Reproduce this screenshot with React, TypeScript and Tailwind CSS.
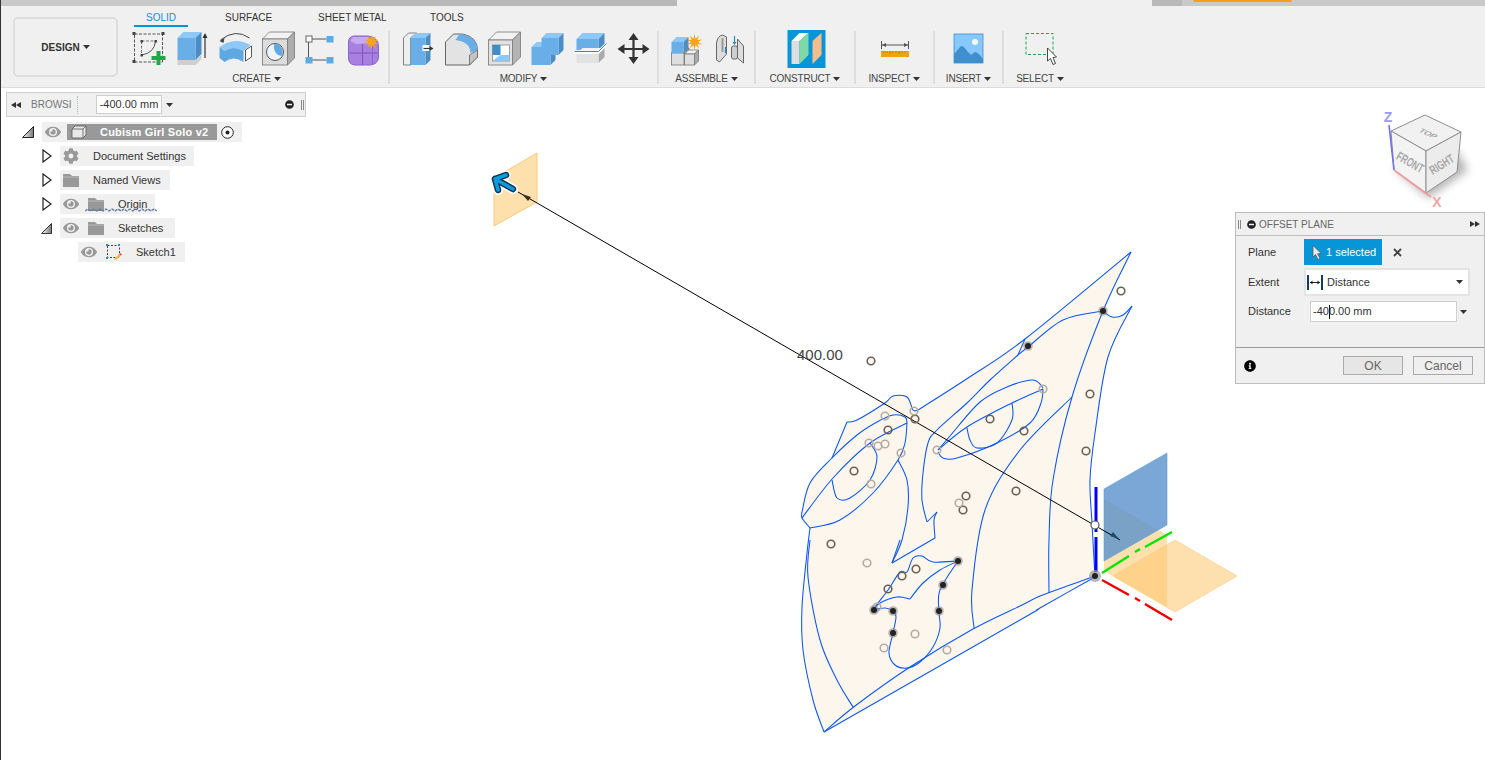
import type { ReactNode } from "react";
import { FaCog, FaEye, FaInfoCircle, FaMinusCircle } from "react-icons/fa";

type Pt = [number, number];

// catmull-rom through traced points
function curve(pts: Pt[]) {
    let d = `M${pts[0][0]},${pts[0][1]}`;
    for (let i = 0; i < pts.length - 1; i++) {
        const p0 = pts[Math.max(i - 1, 0)];
        const p1 = pts[i];
        const p2 = pts[i + 1];
        const p3 = pts[Math.min(i + 2, pts.length - 1)];
        const c1 = [p1[0] + (p2[0] - p0[0]) / 6, p1[1] + (p2[1] - p0[1]) / 6];
        const c2 = [p2[0] - (p3[0] - p1[0]) / 6, p2[1] - (p3[1] - p1[1]) / 6];
        d += ` C${c1[0]},${c1[1]} ${c2[0]},${c2[1]} ${p2[0]},${p2[1]}`;
    }
    return d;
}

function star(cx: number, cy: number, r1: number, r2: number, n = 10) {
    const out: string[] = [];
    for (let i = 0; i < n * 2; i++) {
        const r = i % 2 ? r2 : r1;
        const a = (Math.PI * i) / n;
        out.push(`${cx + r * Math.sin(a)},${cy - r * Math.cos(a)}`);
    }
    return out.join(" ");
}

const upperEdge: Pt[] = [[824, 732], [855, 706], [910, 667], [973, 629], [1020, 606], [1040, 596], [1070, 585], [1095, 576]];
const lowerEdge: Pt[] = [[824, 732], [1020, 620], [1040, 608], [1095, 577]];
const rightEdge: Pt[] = [[1095, 577], [1092, 523], [1090, 480], [1095, 433], [1108, 357], [1132, 306]];
const wave: Pt[] = [[1132, 306], [1123, 315], [1112, 317], [1103, 311]];
const capEdge: Pt[] = [[918, 410], [913, 410], [907, 397], [893, 396], [885, 403], [857, 420], [847, 422]];
const eyeArc: Pt[] = [[832, 458], [810, 483], [802, 512], [802, 518], [810, 528]];
const leftEdge: Pt[] = [[810, 528], [807, 553], [802, 607], [803, 650], [813, 700], [824, 732]];

const blueCurves: Pt[][] = [
    upperEdge,
    lowerEdge,
    rightEdge,
    wave,
    [[1103, 311], [1063, 320], [1028, 347], [1018, 355]],
    [[1018, 355], [1025, 339]],
    [[1131, 252], [1103, 311], [1072, 397], [1053, 480], [1049, 540], [1049, 593]],
    [[1072, 397], [1020, 450], [985, 510], [972, 590], [974, 628]],
    [[1131, 252], [1025, 339], [965, 380], [918, 410]],
    capEdge,
    [[847, 422], [832, 458]],
    leftEdge,
    [[810, 540], [808, 577], [820, 640], [837, 680], [853, 707]],
    // left eye
    [[802, 512], [810, 483], [832, 458], [857, 435], [877, 422], [893, 415], [905, 417], [907, 423]],
    [[802, 512], [802, 518], [810, 528]],
    [[907, 423], [870, 443], [833, 478], [802, 518]],
    [[907, 423], [905, 443], [898, 460], [873, 493], [840, 520], [810, 528]],
    [[870, 443], [877, 457], [870, 480], [850, 498], [837, 498], [832, 480]],
    // nose
    [[898, 460], [907, 480], [908, 507], [902, 540], [892, 563]],
    [[892, 563], [935, 538]],
    [[935, 538], [934, 520], [937, 512]],
    [[937, 512], [927, 522]],
    [[927, 522], [922, 500], [923, 473], [928, 443], [937, 430], [967, 403], [990, 380], [1018, 355]],
    // right eye
    [[938, 450], [950, 436], [980, 402], [1007, 387], [1033, 380], [1043, 388]],
    [[938, 450], [967, 427], [1012, 403], [1043, 389]],
    [[1043, 389], [1041, 403], [1030, 423], [997, 443], [957, 458], [943, 458], [938, 452]],
    [[1012, 403], [1012, 420], [997, 443], [977, 448], [970, 440], [967, 428]],
    // mouth and chin
    [[900, 540], [892, 563]],
    [[958, 561], [933, 562], [922, 556], [913, 558], [907, 572], [900, 572], [888, 590], [878, 603], [873, 610]],
    [[958, 561], [940, 570], [923, 583], [910, 599]],
    [[910, 599], [897, 597], [880, 603], [873, 610]],
    [[873, 610], [885, 608], [893, 611], [896, 617], [893, 633], [889, 653], [895, 665], [907, 668], [920, 662], [933, 647], [940, 628], [939, 612], [940, 590], [958, 561]],
];

const silhouette =
    curve(lowerEdge) +
    curve(rightEdge.slice(1)).replace("M", "L") +
    curve(wave.slice(1)).replace("M", "L") +
    " L1131,252 L1025,339 L965,380 " +
    curve(capEdge).replace("M", "L") +
    curve(eyeArc).replace("M", "L") +
    curve(leftEdge).replace("M", "L") +
    "Z";

const darkRings: Pt[] = [[1121, 291], [871, 361], [1090, 394], [990, 419], [1024, 431], [1086, 451], [915, 419], [888, 430], [854, 471], [1016, 491], [966, 496], [963, 510], [831, 544], [916, 569], [902, 576], [888, 589]];
const lightRings: Pt[] = [[1043, 389], [885, 416], [914, 411], [869, 443], [878, 446], [885, 444], [901, 453], [871, 484], [937, 450], [959, 503], [867, 563], [915, 634], [884, 648], [947, 650], [877, 607]];
const solidDots: Pt[] = [[1103, 311], [1028, 346], [958, 561], [943, 585], [939, 611], [893, 611], [874, 610], [893, 633]];

function Caret() {
    return (
        <svg viewBox="0 0 7 4" className="ml-[3px] h-[4px] w-[7px] shrink-0">
            <path d="M0,0H7L3.5,4Z" fill="#333" />
        </svg>
    );
}

function Tool({ x, children }: { x: number; children: ReactNode }) {
    return (
        <svg viewBox={`${x} 31 43 36`} className="h-[36px] w-[43px] shrink-0 overflow-visible">
            {children}
        </svg>
    );
}

function Panel({ label, width, last, children }: { label: string; width: string; last?: boolean; children: ReactNode }) {
    return (
        <div className={`flex h-[53px] shrink-0 flex-col items-center ${width} ${last ? "" : "border-r-2 border-[#dedede]"}`}>
            <div className="flex h-[36px] justify-center">{children}</div>
            <div className="mt-[5px] flex translate-y-px items-center text-[10px] leading-[12px] tracking-[-0.2px] text-[#444]">
                {label}
                <Caret />
            </div>
        </div>
    );
}

function Box({ x, y, w, h, d, front, top, side, stroke = "none" }: { x: number; y: number; w: number; h: number; d: number; front: string; top: string; side: string; stroke?: string }) {
    return (
        <g stroke={stroke} strokeWidth="0.8">
            <path d={`M${x},${y}l${d},${-d}h${w}l${-d},${d}z`} fill={top} />
            <path d={`M${x + w},${y}l${d},${-d}v${h}l${-d},${d}z`} fill={side} />
            <rect x={x} y={y} width={w} height={h} fill={front} />
        </g>
    );
}

function CreatePanel() {
    return (
        <Panel label="CREATE" width="w-[265px]">
            <Tool x={127.5}>
                <rect x="134" y="34" width="28" height="28" fill="none" stroke="#555" strokeDasharray="3 1.5" />
                <path d="M141,41H155" fill="none" stroke="#777" strokeDasharray="3 1.5" />
                <path d="M141,41V55" fill="none" stroke="#777" strokeDasharray="3 1.5" />
                <path d="M155,41Q154,53 141,55" fill="none" stroke="#555" />
                <path d="M132,32h3v3h-3zM161,32h3v3h-3zM132,60h3v3h-3zM140,40h2.5v2.5h-2.5zM154,40h2.5v2.5h-2.5zM140,54h2.5v2.5h-2.5z" fill="#444" />
                <path d="M156,51h4v5h5v4h-5v5h-4v-5h-5v-4h5z" fill="#1ea84a" />
            </Tool>
            <Tool x={170.5}>
                <path d="M177,60h18l6,-5v4l-6,6h-18z" fill="#cfcfcf" />
                <Box x={177} y={38} w={18} h={22} d={6} front="#69aee6" top="#8ec8f7" side="#4b8dc4" />
                <path d="M204.5,58V36" stroke="#333" strokeWidth="1.2" />
                <path d="M202,38L204.5,33L207,38Z" fill="#333" />
            </Tool>
            <Tool x={213.5}>
                <path d="M220,40Q235,28 249,38" fill="none" stroke="#444" />
                <path d="M219,41l5,-3l-1,5z" fill="#444" />
                <path d="M219,47Q234,36 250,45L243,51Q233,45 224,51Z" fill="#8ec8f7" />
                <path d="M219,47L224,51Q233,45 243,51V62Q233,55 224,62L219,58Z" fill="#5fa9e3" />
                <path d="M245,50L251,46V57L245,61Z" fill="#fff" stroke="#555" />
            </Tool>
            <Tool x={256.5}>
                <Box x={262} y={39} w={25} h={26} d={7} front="#dcdcdc" top="#f2f2f2" side="#adadad" stroke="#777" />
                <circle cx="274.5" cy="52" r="8.5" fill="#eef4fa" stroke="#555" strokeWidth="1" />
                <path d="M274,44A8,8 0 0,1 281,56A9,9 0 0,1 274,44Z" fill="#5fa9e3" />
            </Tool>
            <Tool x={299.5}>
                <path d="M311,39H326M308,42V57M311,60H326" stroke="#555" />
                <rect x="305.5" y="36" width="6" height="6" fill="#fff" stroke="#666" />
                <rect x="326" y="36" width="7" height="6.5" fill="#5fa9e3" />
                <rect x="305" y="57" width="7" height="6.5" fill="#5fa9e3" />
                <rect x="326" y="57" width="7" height="6.5" fill="#5fa9e3" />
            </Tool>
            <Tool x={342.5}>
                <path d="M353,36H368Q378,38 378,46V58Q377,64 370,65H354Q348,64 348,58V42Q348,37 353,36Z" fill="#a97fe2" stroke="#8a63c6" />
                <path d="M350,41Q351,37 354,37H368L372,43L356,44Z" fill="#c6abf0" />
                <path d="M349,53H377M362,44V65" stroke="#7c55b8" />
                <path d="M372,44V64" stroke="#8a63c6" />
                <polygon points={star(371, 42, 7.5, 3.5, 10)} fill="#f6a516" />
            </Tool>
        </Panel>
    );
}

function ModifyPanel() {
    return (
        <Panel label="MODIFY" width="w-[269px]">
            <Tool x={394.5}>
                <path d="M403,38L408,33H416L410,38V65H403Z" fill="#eee" stroke="#666" strokeWidth="0.8" />
                <Box x={410} y={38} w={15} h={27} d={5} front="#69aee6" top="#8ec8f7" side="#4b8dc4" />
                <rect x="422" y="45" width="7" height="6" fill="#fff" />
                <path d="M423,48.5H430" stroke="#333" strokeWidth="1.2" />
                <path d="M429,46L433,48.5L429,51Z" fill="#333" />
            </Tool>
            <Tool x={437.5}>
                <path d="M445,42L453,34H462Q477,37 477,50V57L469,65H445Z" fill="#e3e3e3" stroke="#666" />
                <path d="M459,34Q477,36 477,50L470,53Q470,42 455,40Z" fill="#69aee6" />
                <path d="M469,55V65L477,57V50Z" fill="#c4c4c4" stroke="#666" strokeWidth="0.8" />
            </Tool>
            <Tool x={480.5}>
                <Box x={488} y={40} w={24} h={25} d={8} front="#e2e2e2" top="#f2f2f2" side="#b4b4b4" stroke="#777" />
                <rect x="492" y="45" width="17" height="16" fill="#fff" stroke="#666" strokeWidth="0.6" />
                <path d="M492,45H500V55H492Z" fill="#3f8dc9" />
                <path d="M492,61L500,55H509V61Z" fill="#8ec8f7" />
            </Tool>
            <Tool x={523.5}>
                <Box x={531} y={47} w={19} h={18} d={5} front="#69aee6" top="#8ec8f7" side="#4b8dc4" />
                <Box x={541} y={38} w={17} h={17} d={5} front="#69aee6" top="#8ec8f7" side="#4b8dc4" />
            </Tool>
            <Tool x={566.5}>
                <Box x={576} y={39} w={22} h={11} d={6} front="#69aee6" top="#8ec8f7" side="#4b8dc4" />
                <Box x={576} y={54} w={22} h={9} d={6} front="#e2e2e2" top="#f2f2f2" side="#aaa" />
                <path d="M574,52H598L606,44" fill="none" stroke="#fff" strokeWidth="3" />
                <path d="M574,51.5H598L606,43.5" fill="none" stroke="#2a86d1" strokeWidth="1" />
            </Tool>
            <Tool x={609.5}>
                <path d="M633,38V60M622,49H644" stroke="#333" strokeWidth="2.2" />
                <path d="M633,33L638,40H628ZM633,64L638,57H628ZM617,49L624,44V54ZM649,49L642,44V54Z" fill="#333" />
            </Tool>
        </Panel>
    );
}

function AssemblePanel() {
    return (
        <Panel label="ASSEMBLE" width="w-[97px]">
            <Tool x={663.5}>
                <Box x={671} y={53} w={12.5} h={12} d={5} front="#dedede" top="#f2f2f2" side="#aaa" stroke="#777" />
                <Box x={684} y={54} w={10} h={11} d={4} front="#dedede" top="#f2f2f2" side="#aaa" stroke="#777" />
                <Box x={671} y={42} w={12} h={11} d={5} front="#69aee6" top="#8ec8f7" side="#4b8dc4" />
                <polygon points={star(694, 42, 8, 3.5, 10)} fill="#f6a516" />
            </Tool>
            <Tool x={706.5}>
                <path d="M716,43Q717,36 722,35L726,37V54L719,62L716,60Z" fill="#ddd" stroke="#666" />
                <path d="M722,38V52" stroke="#999" strokeWidth="2" />
                <path d="M737,39L743,46V63L737,58Z" fill="#ddd" stroke="#666" />
                <rect x="731" y="46" width="6" height="13" rx="2" fill="#cfcfcf" stroke="#666" />
                <path d="M734,36V44M725,47V53" stroke="#2a86d1" strokeWidth="1.2" />
                <path d="M732,42h4l-2,3z" fill="#2a86d1" />
            </Tool>
        </Panel>
    );
}

function ConstructPanel() {
    return (
        <Panel label="CONSTRUCT" width="w-[100px]">
            <Tool x={783.5}>
                <rect x="787" y="30" width="38" height="38" fill="#0696d7" />
                <path d="M791,41H799V64H791Z" fill="#dedede" />
                <path d="M791,41L799,33H808L799,41Z" fill="#fff" />
                <path d="M799,41L808,33V55L799,64Z" fill="#7fd8a8" />
                <path d="M812,41L821,33V55L812,64Z" fill="#f5bd8c" />
            </Tool>
        </Panel>
    );
}

function InspectPanel() {
    return (
        <Panel label="INSPECT" width="w-[79px]">
            <Tool x={873}>
                <path d="M881.5,41V49M908.5,41V49M882,45H908" stroke="#555" />
                <path d="M882,45l4,-2v4zM908,45l-4,-2v4z" fill="#555" />
                <rect x="881" y="51" width="28" height="6" fill="#f0a30a" />
                <path d="M884,51v2M887,51v2M890,51v3M893,51v2M896,51v2M899,51v3M902,51v2M905,51v2" stroke="#a86f00" strokeWidth="0.6" />
            </Tool>
        </Panel>
    );
}

function InsertPanel() {
    return (
        <Panel label="INSERT" width="w-[69px]">
            <Tool x={947}>
                <rect x="954" y="34" width="29" height="29" fill="#86c8ff" stroke="#3f8fcc" strokeWidth="0.8" />
                <path d="M954,63V54L961,46Q964,46 967,51L971,55L975,52Q978,52 983,59V63Z" fill="#3f8fcc" />
                <circle cx="975" cy="42" r="3" fill="#f4fbe8" />
            </Tool>
        </Panel>
    );
}

function SelectPanel() {
    return (
        <Panel label="SELECT" width="w-[72px]" last>
            <Tool x={1018.5}>
                <rect x="1025.5" y="33.5" width="27" height="21" fill="none" stroke="#1ea84a" strokeDasharray="3 2" />
                <path d="M1047,48V61L1050,58.5L1052.5,64.5L1055,63.5L1052.5,57.5L1056,57Z" fill="#fff" stroke="#333" strokeWidth="0.9" />
            </Tool>
        </Panel>
    );
}

function Toolbar() {
    return (
        <div className="flex h-[82px] shrink-0 border-b border-[#dcdcdc] bg-[#f0f0f0]">
            <div className="mt-[11px] ml-[13px] flex h-[60px] w-[105px] shrink-0 items-center justify-center rounded-[5px] border-2 border-[#dedede] text-[10px] font-bold text-[#333]">
                DESIGN
                <Caret />
            </div>
            <div className="ml-[7px] flex flex-col">
                <div className="flex h-[21px] whitespace-nowrap text-[10px] leading-[24px] text-[#333]">
                    <div className="ml-[9px] w-[54px] border-b-2 border-[#0696d7] text-center text-[#0696d7]">SOLID</div>
                    <div className="ml-[37px] w-[47px]">SURFACE</div>
                    <div className="ml-[46px] w-[68px]">SHEET METAL</div>
                    <div className="ml-[44px]">TOOLS</div>
                </div>
                <div className="mt-[4px] flex">
                    <CreatePanel />
                    <ModifyPanel />
                    <AssemblePanel />
                    <ConstructPanel />
                    <InspectPanel />
                    <InsertPanel />
                    <SelectPanel />
                </div>
            </div>
        </div>
    );
}

function Browser() {
    return (
        <div className="absolute top-[4px] left-[6px] flex h-[25px] w-[300px] items-center border border-[#cfcfcf] bg-[#f0f0f0] text-[10px] text-[#777]">
            <svg viewBox="0 0 10 6" className="ml-[4px] h-[6px] w-[10px]">
                <path d="M5,0V6L0,3ZM10,0V6L5,3Z" fill="#333" />
            </svg>
            <span className="ml-[10px] w-[41px] overflow-hidden">BROWSI</span>
            <span className="ml-[5px] h-[18px] border-l border-dotted border-[#bbb]" />
            <div className="ml-[18px] flex h-[19px] w-[66px] items-center justify-center border border-[#cfcfcf] bg-white text-[11px] text-[#333]">-400.00 mm</div>
            <svg viewBox="0 0 7 4" className="ml-[4px] h-[4px] w-[7px]">
                <path d="M0,0H7L3.5,4Z" fill="#333" />
            </svg>
            <FaMinusCircle className="ml-auto text-[9px] text-[#222]" />
            <span className="mr-[1px] ml-[7px] h-[10px] w-[3px] border-x border-[#888]" />
        </div>
    );
}

function Folder({ hatched }: { hatched?: boolean }) {
    return (
        <svg viewBox="0 0 16 13" className="h-[13px] w-[16px] shrink-0">
            <path d="M0,0H7L9,2H16V13H0Z" fill="#999" />
            <path d="M0,3H16" stroke="#ccc" strokeWidth="0.6" />
            {hatched ? <path d="M0,13H16" stroke="#777" strokeWidth="1" /> : null}
        </svg>
    );
}

function Expander({ open, big }: { open?: boolean; big?: boolean }) {
    if (open) {
        return (
            <svg viewBox="0 0 12 12" className={big ? "h-[12px] w-[12px]" : "h-[11px] w-[11px]"}>
                <defs>
                    <linearGradient id="tri" x1="0" y1="0" x2="1" y2="0">
                        <stop offset="0" stopColor="#fff" />
                        <stop offset="1" stopColor="#777" />
                    </linearGradient>
                </defs>
                <path d="M0.5,11.5H11.5V0.5Z" fill="url(#tri)" stroke="#222" />
            </svg>
        );
    }
    return (
        <svg viewBox="0 0 10 14" className="h-[14px] w-[10px]">
            <path d="M1,1L9,7L1,13Z" fill="#fff" stroke="#222" strokeWidth="1.2" />
        </svg>
    );
}

function Eye() {
    return <FaEye className="shrink-0 text-[16px] text-[#999]" />;
}

function Tree() {
    return (
        <div className="absolute top-[34px] left-0 flex flex-col gap-[4px] text-[11px] text-[#333]">
            <div className="ml-[22px] flex h-[20px] items-center">
                <Expander open big />
                <div className="ml-[8px] flex h-[20px] w-[200px] items-center bg-[#f0f0f0]">
                    <span className="ml-[3px]">
                        <Eye />
                    </span>
                    <div className="ml-[6px] flex h-[16px] w-[150px] items-center bg-[#999] pl-[4px]">
                        <svg viewBox="0 0 16 14" className="h-[14px] w-[16px]">
                            <path d="M1,4L4,1H15V10L12,13H1Z" fill="#e8e8e8" stroke="#555" strokeWidth="0.8" />
                            <path d="M1,4H12V13M12,4L15,1" fill="none" stroke="#555" strokeWidth="0.8" />
                        </svg>
                        <span className="ml-[13px] font-bold tracking-[0.2px] text-white">Cubism Girl Solo v2</span>
                    </div>
                    <svg viewBox="0 0 13 13" className="ml-[4px] h-[13px] w-[13px]">
                        <circle cx="6.5" cy="6.5" r="5.8" fill="#fff" stroke="#222" />
                        <circle cx="6.5" cy="6.5" r="2" fill="#222" />
                    </svg>
                </div>
            </div>
            <div className="ml-[42px] flex h-[20px] items-center">
                <Expander />
                <div className="ml-[8px] flex h-[20px] w-[134px] items-center bg-[#f0f0f0] pl-[3px]">
                    <FaCog className="shrink-0 text-[16px] text-[#999]" />
                    <span className="ml-[14px]">Document Settings</span>
                </div>
            </div>
            <div className="ml-[42px] flex h-[20px] items-center">
                <Expander />
                <div className="ml-[8px] flex h-[20px] w-[110px] items-center bg-[#f0f0f0] pl-[3px]">
                    <Folder />
                    <span className="ml-[14px]">Named Views</span>
                </div>
            </div>
            <div className="ml-[42px] flex h-[20px] items-center">
                <Expander />
                <div className="relative ml-[8px] flex h-[20px] w-[95px] items-center bg-[#f0f0f0] pl-[3px]">
                    <Eye />
                    <span className="ml-[9px]">
                        <Folder hatched />
                    </span>
                    <span className="ml-[14px]">Origin</span>
                    <svg viewBox="0 0 72 5" className="absolute top-[14px] left-[25px] h-[5px] w-[72px]">
                        <path d="M0,3l3,-2l3,2l3,-2l3,2l3,-2l3,2l3,-2l3,2l3,-2l3,2l3,-2l3,2l3,-2l3,2l3,-2l3,2l3,-2l3,2l3,-2l3,2l3,-2l3,2l3,-2l3,2" fill="none" stroke="#5f7ba0" strokeWidth="1.4" strokeDasharray="3 1" />
                    </svg>
                </div>
            </div>
            <div className="ml-[41px] flex h-[20px] items-center">
                <Expander open />
                <div className="ml-[8px] flex h-[20px] w-[115px] items-center bg-[#f0f0f0] pl-[3px]">
                    <Eye />
                    <span className="ml-[9px]">
                        <Folder />
                    </span>
                    <span className="ml-[14px]">Sketches</span>
                </div>
            </div>
            <div className="ml-[78px] flex h-[20px] w-[107px] items-center bg-[#f0f0f0] pl-[3px]">
                <Eye />
                <svg viewBox="0 0 16 16" className="ml-[9px] h-[16px] w-[16px] shrink-0">
                    <rect x="1.5" y="1.5" width="12" height="12" fill="none" stroke="#444" strokeDasharray="2 1.5" />
                    <path d="M0,0h2v2h-2zM12,0h2v2h-2zM0,13h2v2h-2z" fill="#1c8fe0" />
                    <path d="M8,15L14,9L16,10.5L10,16Z" fill="#f4b942" />
                    <path d="M14,9L16,10.5L15,11.5L13.2,10Z" fill="#e2445c" />
                </svg>
                <span className="ml-[14px]">Sketch1</span>
            </div>
        </div>
    );
}

function Dialog() {
    return (
        <div className="absolute top-[124px] left-[1235px] flex h-[172px] w-[250px] flex-col border border-[#bdbdbd] bg-[#f0f0f0] text-[11px] text-[#333]">
            <div className="flex h-[23px] shrink-0 items-center border-b border-[#bdbdbd] text-[10px] text-[#666]">
                <span className="ml-[2px] h-[9px] w-[3px] border-x border-[#888]" />
                <FaMinusCircle className="ml-[6px] text-[9px] text-[#222]" />
                <span className="ml-[3px]">OFFSET PLANE</span>
                <svg viewBox="0 0 10 6" className="mr-[4px] ml-auto h-[6px] w-[10px]">
                    <path d="M0,0V6L5,3ZM5,0V6L10,3Z" fill="#333" />
                </svg>
            </div>
            <div className="flex h-[112px] shrink-0 flex-col border-b border-[#9a9a9a] pt-[3px] pl-[12px]">
                <div className="flex h-[26px] items-center">
                    <span className="w-[56px]">Plane</span>
                    <div className="flex h-[26px] w-[78px] items-center bg-[#0696d7] text-white">
                        <svg viewBox="0 0 10 15" className="ml-[8px] h-[15px] w-[10px]">
                            <path d="M1,0.5V12L3.5,9.5L6,14.5L8,13.5L5.6,8.8L9.2,8.5Z" fill="#e8e8e8" stroke="#555" strokeWidth="0.7" />
                        </svg>
                        <span className="ml-[4px]">1 selected</span>
                    </div>
                    <svg viewBox="0 0 9 9" className="ml-[11px] h-[9px] w-[9px]">
                        <path d="M1,1L8,8M8,1L1,8" stroke="#444" strokeWidth="1.8" />
                    </svg>
                </div>
                <div className="mt-[3px] flex h-[28px] items-center">
                    <span className="w-[56px]">Extent</span>
                    <div className="flex h-[28px] w-[166px] items-center border-2 border-[#e4e4e4] bg-white">
                        <svg viewBox="0 0 16 15" className="ml-[1px] h-[15px] w-[16px]">
                            <path d="M1,0V15M15,0V15" stroke="#123a6b" strokeWidth="2" />
                            <path d="M3,7.5H13" stroke="#222" />
                            <path d="M3,7.5L5.5,5.5V9.5ZM13,7.5L10.5,5.5V9.5Z" fill="#222" />
                        </svg>
                        <span className="ml-[4px]">Distance</span>
                        <svg viewBox="0 0 7 4" className="mr-[5px] ml-auto h-[4px] w-[7px]">
                            <path d="M0,0H7L3.5,4Z" fill="#333" />
                        </svg>
                    </div>
                </div>
                <div className="mt-[5px] flex h-[21px] items-center">
                    <span className="w-[62px]">Distance</span>
                    <div className="relative flex h-[21px] w-[147px] items-center border border-[#d0d0d0] bg-white pl-[2px]">
                        -400.00 mm
                        <span className="absolute top-[3px] left-[18px] h-[14px] w-px bg-[#111]" />
                    </div>
                    <svg viewBox="0 0 7 4" className="ml-[3px] h-[4px] w-[7px]">
                        <path d="M0,0H7L3.5,4Z" fill="#333" />
                    </svg>
                </div>
            </div>
            <div className="flex flex-1 items-center pr-[11px] pl-[8px] text-[12px] text-[#666]">
                <FaInfoCircle className="text-[12px] text-black" />
                <div className="ml-auto flex h-[19px] w-[60px] items-center justify-center border border-[#aaa] bg-[#e6e6e6]">OK</div>
                <div className="ml-[10px] flex h-[19px] w-[60px] items-center justify-center border border-[#aaa] bg-[#efefef]">Cancel</div>
            </div>
        </div>
    );
}

function ViewCube() {
    return (
        <g>
            <polygon points="1394,168 1428,198 1468,170 1456,150" fill="#000" opacity="0.3" className="blur-[5px]" />
            <polygon points="1391,131 1425,115 1461,132 1426,151" fill="#f1f1f1" stroke="#8e8e8e" />
            <polygon points="1391,131 1426,151 1426,193 1394,170" fill="#f3f3f3" stroke="#8e8e8e" />
            <polygon points="1426,151 1461,132 1457,172 1426,193" fill="#ececec" stroke="#8e8e8e" />
            <g fill="#a8a8a8" fontWeight="bold" textAnchor="middle">
                <text fontSize="9" transform="translate(1426,135) rotate(25) skewX(-30) scale(1,0.75)">TOP</text>
                <text fontSize="10" transform="translate(1408,166) rotate(30) scale(0.85,1.25)">FRONT</text>
                <text fontSize="10" transform="translate(1444,168) rotate(-32) scale(0.85,1.25)">RIGHT</text>
            </g>
            <path d="M1394,170L1389,125" stroke="#6f6ff0" strokeWidth="1.6" />
            <path d="M1394,170L1431,197" stroke="#f09a9a" strokeWidth="1.6" />
            <text x="1388" y="122" fontSize="14" fontWeight="bold" fill="#9a9af5" textAnchor="middle">Z</text>
            <text x="1437" y="207" fontSize="14" fontWeight="bold" fill="#f7a3a3" textAnchor="middle">X</text>
        </g>
    );
}

function Scene() {
    return (
        <svg viewBox="0 88 1485 672" className="absolute inset-0 h-[672px] w-[1485px]">
            {/* far plane */}
            <polygon points="494,226 537,202 537,153 494,178" fill="#fde0ac" stroke="#fbc97a" />
            {/* sketch face */}
            <path d={silhouette} fill="#fdf6ec" />
            {blueCurves.map((c, i) => (
                <path key={i} d={curve(c)} fill="none" stroke="#0a55f5" strokeWidth="1.05" />
            ))}
            {/* origin planes */}
            <polygon points="1175,540 1237,576 1175,612 1113,576" fill="#fdc66e" fillOpacity="0.55" stroke="#fdd9a0" />
            <polygon points="1104,499 1167,535 1167,607 1104,571" fill="#fdc66e" fillOpacity="0.55" />
            <polygon points="1104,489 1167,453 1167,525 1104,561" fill="#5d94cc" fillOpacity="0.82" stroke="#5aa0e0" strokeWidth="0.6" />
            {/* axes */}
            <path d="M1096,487V532M1096,537V572" stroke="#0000ff" strokeWidth="3" />
            <path d="M1102,573L1129,556M1135,552L1140,549M1145,547L1172,532" stroke="#00e600" strokeWidth="2.5" />
            <path d="M1102,580L1129,595M1135,598L1140,601M1145,604L1172,620" stroke="#ee0000" strokeWidth="2.5" />
            {/* distance line */}
            <path d="M518,192L1120,540" stroke="#000" strokeWidth="1" />
            <path d="M522,194l9,3l-3,4z" fill="#3a3020" />
            <path d="M1119,539l-9,-3l3,-4z" fill="#1f4a70" />
            <text x="797" y="360" fontSize="15" fill="#444">400.00</text>
            {/* rings */}
            {darkRings.map(([x, y], i) => (
                <circle key={i} cx={x} cy={y} r="3.8" fill="none" stroke="#6a6155" strokeWidth="1.6" />
            ))}
            {lightRings.map(([x, y], i) => (
                <circle key={i} cx={x} cy={y} r="3.8" fill="none" stroke="#b5aca2" strokeWidth="1.6" />
            ))}
            {solidDots.map(([x, y], i) => (
                <g key={i}>
                    <circle cx={x} cy={y} r="4.8" fill="#888" opacity="0.6" />
                    <circle cx={x} cy={y} r="3" fill="#222" />
                </g>
            ))}
            <circle cx="1095" cy="576" r="6" fill="#999" opacity="0.7" />
            <circle cx="1095" cy="576" r="3" fill="#222" />
            <circle cx="1095" cy="525" r="4" fill="#fff" stroke="#555" strokeWidth="1.2" />
            {/* drag arrow */}
            <g fill="none" strokeLinecap="round" strokeLinejoin="round">
                <path d="M506,175L495,179L498,190M495,179L513,189" stroke="#fff" strokeWidth="10" />
                <path d="M506,175L495,179L498,190M495,179L513,189" stroke="#14324a" strokeWidth="6.5" />
                <path d="M506,175L495,179L498,190M495,179L513,189" stroke="#0a9ade" strokeWidth="3.6" />
            </g>
            <ViewCube />
        </svg>
    );
}

export default function App() {
    return (
        <div className="relative flex h-[760px] w-[1485px] flex-col overflow-hidden bg-white font-['Liberation_Sans',sans-serif]">
            <div className="flex h-[6px] shrink-0">
                <div className="w-[200px] bg-[#c9c9c9]" />
                <div className="w-[477px] bg-[#b9b9b9]" />
                <div className="w-[475px] bg-[#f0f0f0]" />
                <div className="w-[30px] bg-[#b9b9b9]" />
                <div className="flex-1 bg-[#c9c9c9] pl-[11px]">
                    <div className="h-[2px] w-[99px] rounded-b-[2px] bg-[#f79d1c]" />
                </div>
            </div>
            <Toolbar />
            <div className="relative flex-1">
                <Scene />
                <Browser />
                <Tree />
                <Dialog />
            </div>
            <div className="absolute top-0 left-0 h-full w-px bg-[#333]" />
        </div>
    );
}
